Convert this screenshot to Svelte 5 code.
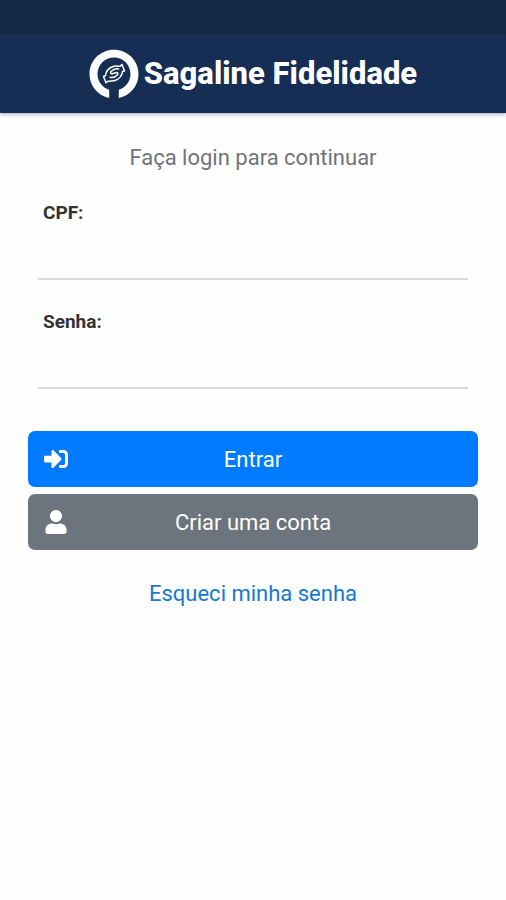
<script lang="ts">
	let cpf = $state('');
	let senha = $state('');

	function entrar(e: SubmitEvent) {
		e.preventDefault();
	}
</script>

<div class="screen">
	<div class="status-bar"></div>
	<header>
		<svg class="logo" viewBox="0 0 50 50" aria-hidden="true">
			<path
				d="M20.2 49C8.8 46.6.5 37 .5 25 .5 11.5 11.4.7 25 .7S49.500 11.500 49.500 25c0 12-8.300 21.600-19.700 24V40.800c6.900-2.200 11.700-8.400 11.700-15.800 0-9.200-7.300-16.600-16.500-16.600S8.500 15.800 8.500 25c0 7.400 4.800 13.600 11.700 15.800z"
				fill="#fff"
			/>
			<g fill="none" stroke="#fff" stroke-width="1.500" stroke-linejoin="round" stroke-linecap="round">
				<path d="M16.500 26.500c.5-4.500 3.500-7.500 7.500-9 2.800-1 4.800.2 7.500-.5l1.500-1.500 2.500 6.500-2 .5c-.5 4-3.500 7.500-7.500 9-2.800 1-4.800-.2-7.500 1l-1.500 1.200-2.500-6.200z" />
				<path d="M29.500 20c-2.500-.8-5.500.5-7.500 2.500-1.200 1.700.2 2.500 2 2l3-.8c2-.4 2.500 1 1.200 2.300-2 2-4.700 3-7.200 2.200" />
			</g>
		</svg>
		<h1>Sagaline Fidelidade</h1>
	</header>

	<main>
		<p class="intro">Faça login para continuar</p>

		<form onsubmit={entrar}>
			<div class="field">
				<label for="cpf">CPF:</label>
				<input id="cpf" type="text" inputmode="numeric" bind:value={cpf} />
			</div>
			<div class="field">
				<label for="senha">Senha:</label>
				<input id="senha" type="password" bind:value={senha} />
			</div>

			<div class="actions">
				<button type="submit" class="btn primary">
					<svg viewBox="0 0 512 512" aria-hidden="true">
						<path
							fill="currentColor"
							d="M416 448h-84c-6.600 0-12-5.400-12-12v-40c0-6.600 5.400-12 12-12h84c17.700 0 32-14.300 32-32V160c0-17.700-14.300-32-32-32h-84c-6.600 0-12-5.400-12-12V76c0-6.600 5.400-12 12-12h84c53 0 96 43 96 96v192c0 53-43 96-96 96zm-47-209L201 71c-15-15-41-4.500-41 17v96H24c-13.300 0-24 10.700-24 24v96c0 13.300 10.700 24 24 24h136v96c0 21.500 26 32 41 17l168-168c9.300-9.400 9.300-24.600 0-34z"
						/>
					</svg>
					<span>Entrar</span>
				</button>
				<button type="button" class="btn secondary">
					<svg viewBox="0 0 512 512" aria-hidden="true">
						<path
							fill="currentColor"
							d="M256 256c70.700 0 128-57.300 128-128S326.700 0 256 0 128 57.300 128 128s57.300 128 128 128zm89.600 32h-16.700c-22.200 10.200-46.900 16-72.900 16s-50.600-5.800-72.900-16h-16.700C92.200 288 32 348.200 32 422.400V464c0 26.500 21.500 48 48 48h352c26.500 0 48-21.500 48-48v-41.600c0-74.200-60.200-134.400-134.400-134.400z"
						/>
					</svg>
					<span>Criar uma conta</span>
				</button>
			</div>
		</form>

		<a class="forgot" href="#senha">Esqueci minha senha</a>
	</main>
</div>

<style>
	:global(body) { margin: 0; background: #fefefe; }

	.screen { font-family: Roboto, 'Liberation Sans', sans-serif; color: #333; }

	.status-bar { height: 34px; background: #152845; }
	header {
		display: flex; align-items: center; justify-content: center; gap: 5px;
		height: 79px; background: #162e54;
		box-shadow: 0 1px 4px rgba(20, 20, 60, 0.4);
	}
	.logo { width: 50px; height: 50px; }
	h1 { margin: 0; font-size: 31px; line-height: 40px; font-weight: 800; color: #fff; }

	main { display: flex; flex-direction: column; padding: 29px 28px 0; }
	.intro { margin: 0; font-size: 22px; line-height: 32px; text-align: center; color: #6f7478; }

	form { margin-top: 24px; }
	.field { display: flex; flex-direction: column; margin: 0 10px 27px; }
	label { padding-left: 5px; font-size: 19px; line-height: 30px; font-weight: 700; }
	input {
		height: 52px; padding: 0 5px; box-sizing: border-box;
		border: 0; border-bottom: 2px solid #dadada; border-radius: 0;
		background: transparent; font: inherit; font-size: 22px; color: inherit; outline: none;
	}
	input:focus { border-color: #007bff; }

	.actions { display: flex; flex-direction: column; gap: 7px; margin-top: 42px; }
	.btn {
		display: grid; grid-template-columns: 24px 1fr 24px; align-items: center;
		height: 56px; padding: 0 16px; border: 0; border-radius: 7px;
		font: inherit; font-size: 22px; color: #fff; cursor: pointer;
	}
	.btn svg { width: 24px; height: 24px; }
	.primary { background: #007bff; }
	.secondary { background: #6c757d; }

	.forgot {
		align-self: center; margin-top: 28px;
		font-size: 22px; line-height: 32px; color: #1479cf; text-decoration: none;
	}
</style>
